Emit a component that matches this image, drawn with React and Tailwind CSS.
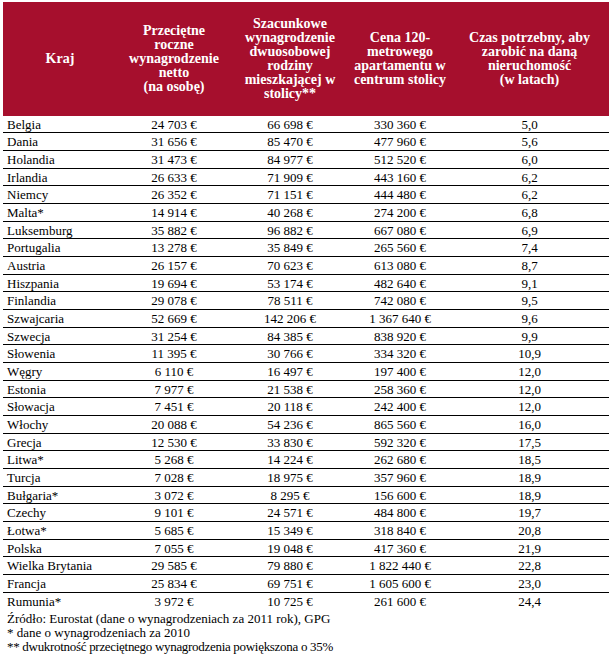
const rows = [
  ["Belgia", "24 703 €", "66 698 €", "330 360 €", "5,0"],
  ["Dania", "31 656 €", "85 470 €", "477 960 €", "5,6"],
  ["Holandia", "31 473 €", "84 977 €", "512 520 €", "6,0"],
  ["Irlandia", "26 633 €", "71 909 €", "443 160 €", "6,2"],
  ["Niemcy", "26 352 €", "71 151 €", "444 480 €", "6,2"],
  ["Malta*", "14 914 €", "40 268 €", "274 200 €", "6,8"],
  ["Luksemburg", "35 882 €", "96 882 €", "667 080 €", "6,9"],
  ["Portugalia", "13 278 €", "35 849 €", "265 560 €", "7,4"],
  ["Austria", "26 157 €", "70 623 €", "613 080 €", "8,7"],
  ["Hiszpania", "19 694 €", "53 174 €", "482 640 €", "9,1"],
  ["Finlandia", "29 078 €", "78 511 €", "742 080 €", "9,5"],
  ["Szwajcaria", "52 669 €", "142 206 €", "1 367 640 €", "9,6"],
  ["Szwecja", "31 254 €", "84 385 €", "838 920 €", "9,9"],
  ["Słowenia", "11 395 €", "30 766 €", "334 320 €", "10,9"],
  ["Węgry", "6 110 €", "16 497 €", "197 400 €", "12,0"],
  ["Estonia", "7 977 €", "21 538 €", "258 360 €", "12,0"],
  ["Słowacja", "7 451 €", "20 118 €", "242 400 €", "12,0"],
  ["Włochy", "20 088 €", "54 236 €", "865 560 €", "16,0"],
  ["Grecja", "12 530 €", "33 830 €", "592 320 €", "17,5"],
  ["Litwa*", "5 268 €", "14 224 €", "262 680 €", "18,5"],
  ["Turcja", "7 028 €", "18 975 €", "357 960 €", "18,9"],
  ["Bułgaria*", "3 072 €", "8 295 €", "156 600 €", "18,9"],
  ["Czechy", "9 101 €", "24 571 €", "484 800 €", "19,7"],
  ["Łotwa*", "5 685 €", "15 349 €", "318 840 €", "20,8"],
  ["Polska", "7 055 €", "19 048 €", "417 360 €", "21,9"],
  ["Wielka Brytania", "29 585 €", "79 880 €", "1 822 440 €", "22,8"],
  ["Francja", "25 834 €", "69 751 €", "1 605 600 €", "23,0"],
  ["Rumunia*", "3 972 €", "10 725 €", "261 600 €", "24,4"],
];

const headers = [
  ["Kraj"],
  ["Przeciętne", "roczne", "wynagrodzenie", "netto", "(na osobę)"],
  ["Szacunkowe", "wynagrodzenie", "dwuosobowej", "rodziny", "mieszkającej w", "stolicy**"],
  ["Cena 120-", "metrowego", "apartamentu w", "centrum stolicy"],
  ["Czas potrzebny, aby", "zarobić na daną", "nieruchomość", "(w latach)"],
];

const grid = "grid grid-cols-[114px_114px_118px_102px_157px]";

export default function App() {
  return (
    <div className="w-[612px] h-[656px] bg-white px-[3px] pt-[2px] text-black font-['Liberation_Serif',serif] overflow-hidden">
      {/* nagłówek */}
      <div className={`${grid} h-[114px] bg-[#a60f2d] text-white font-bold text-[14px] leading-[14px]`}>
        {headers.map((lines, i) => (
          <div key={i} className="flex flex-col items-center justify-center text-center">
            {lines.map((l) => (
              <span key={l} className="whitespace-nowrap">{l}</span>
            ))}
          </div>
        ))}
      </div>

      {/* wiersze */}
      {rows.map((r, i) => (
        <div
          key={r[0]}
          className={`${grid} items-center text-[13px] leading-none ${
            i % 3 === 0 ? "h-[17px]" : "h-[18px]"
          } ${i < rows.length - 1 ? "border-b border-black" : ""}`}
        >
          <div className="pl-[4px] whitespace-nowrap">{r[0]}</div>
          <div className="text-center whitespace-nowrap">{r[1]}</div>
          <div className="text-center whitespace-nowrap">{r[2]}</div>
          <div className="text-center whitespace-nowrap">{r[3]}</div>
          <div className="text-center whitespace-nowrap">{r[4]}</div>
        </div>
      ))}

      {/* przypisy */}
      <div className="pl-[4px] pt-[2px] text-[13px] leading-[14px]">
        <div>Źródło: Eurostat (dane o wynagrodzeniach za 2011 rok), GPG</div>
        <div>* dane o wynagrodzeniach za 2010</div>
        <div className="tracking-[-0.3px]">** dwukrotność przeciętnego wynagrodzenia powiększona o 35%</div>
      </div>
    </div>
  );
}
